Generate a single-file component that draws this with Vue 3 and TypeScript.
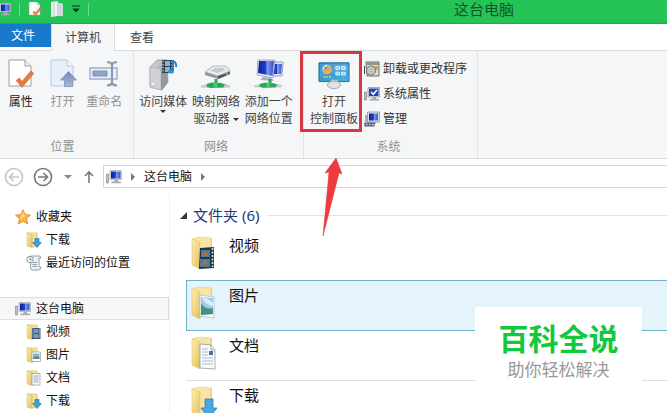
<script setup lang="ts">
interface Entry {
  label: string
  icon: string
}

const favorites: Entry[] = [
  { label: '下载', icon: 'f-download' },
  { label: '最近访问的位置', icon: 'recent' },
]

const libraries: Entry[] = [
  { label: '视频', icon: 'f-video' },
  { label: '图片', icon: 'f-picture' },
  { label: '文档', icon: 'f-document' },
  { label: '下载', icon: 'f-download' },
]

const folders: Entry[] = [
  { label: '视频', icon: 'big-video' },
  { label: '图片', icon: 'big-picture' },
  { label: '文档', icon: 'big-document' },
  { label: '下载', icon: 'big-download' },
]

const selected = '图片'

const systemLinks: Entry[] = [
  { label: '卸载或更改程序', icon: 'uninstall' },
  { label: '系统属性', icon: 'sysprops' },
  { label: '管理', icon: 'manage' },
]
</script>

<template>
  <div class="window">
    <svg class="defs" width="0" height="0" aria-hidden="true">
      <defs>
        <linearGradient id="g-folder" x1="0" y1="0" x2="1" y2="1">
          <stop offset="0" stop-color="#fbf0b4" /><stop offset="1" stop-color="#e3bf55" />
        </linearGradient>
        <linearGradient id="g-screen" x1="0" y1="0" x2="1" y2="0">
          <stop offset="0" stop-color="#0b1f9e" /><stop offset="0.5" stop-color="#2440c8" /><stop offset="0.55" stop-color="#7f9bf0" /><stop offset="1" stop-color="#3350cf" />
        </linearGradient>
        <linearGradient id="g-metal" x1="0" y1="0" x2="1" y2="1">
          <stop offset="0" stop-color="#d9dbdd" /><stop offset="1" stop-color="#85898e" />
        </linearGradient>
        <linearGradient id="g-panel" x1="0" y1="0" x2="1" y2="1">
          <stop offset="0" stop-color="#2c84bd" /><stop offset="1" stop-color="#4fb2e2" />
        </linearGradient>
        <linearGradient id="g-arrow" x1="0" y1="0" x2="0" y2="1">
          <stop offset="0" stop-color="#7288b4" /><stop offset="1" stop-color="#a9b9d8" />
        </linearGradient>
      </defs>

      <symbol id="pc" viewBox="0 0 16 16">
        <path d="M0.5 5h2v9h-2z" fill="#b9bec6" stroke="#7d838c" stroke-width=".6" />
        <path d="M4 1.5h11.5v9H4z" fill="#dfe3ea" stroke="#a2a9b5" stroke-width=".7" />
        <path d="M5 2.5h9.500v7H5z" fill="url(#g-screen)" />
        <path d="M8.500 10.500h3.500v2H15v1.700H5.500v-1.700h3z" fill="#a7adb7" />
      </symbol>
      <symbol id="page-check" viewBox="0 0 28 30">
        <path d="M2 1h16l6 6v20H2z" fill="#fff" stroke="#999da3" />
        <path d="M18 1v6h6" fill="#eef0f2" stroke="#999da3" />
        <path d="M10.500 20l4.500 5.500L25.500 13" fill="none" stroke="#e27c42" stroke-width="4.500" />
      </symbol>
      <symbol id="page-open" viewBox="0 0 28 30">
        <path d="M2 1h16l6 6v20H2z" fill="#e8effa" stroke="#b8c9e4" />
        <path d="M18 1v6h6" fill="#f5f8fd" stroke="#b8c9e4" />
        <path d="M19.500 12.500l8 8.500h-4v6.500h-8V21h-4z" fill="url(#g-arrow)" stroke="#7d91ba" stroke-width=".8" />
      </symbol>
      <symbol id="rename" viewBox="0 0 30 30">
        <path d="M1 9h27v11H1z" fill="#eaf1f9" stroke="#9cb0cc" stroke-width="1.400" />
        <path d="M4 12h14v5H4z" fill="#8da6c3" stroke="#7990b2" />
        <path d="M18 3q4 0 5 2.500Q24 3 28 3M18 26.500q4 0 5-2.500 1 2.500 5 2.500M23 5v19" fill="none" stroke="#8c9cb6" stroke-width="2.200" />
      </symbol>
      <symbol id="page-light" viewBox="0 0 14 16">
        <path d="M1 1l7-1v15l-7 1z" fill="#e9eef2" /><path d="M7 2h5l1 1.500V15H7z" fill="#cad7dd" />
        <path d="M4 2v13" stroke="#c8d3d9" />
      </symbol>

      <symbol id="media" viewBox="0 0 30 32">
        <path d="M2 8L9 1h10l1 22-6 8-12-3z" fill="url(#g-metal)" stroke="#8d9196" stroke-width=".7" />
        <path d="M2 8l11 2v21L2 28z" fill="#cfd1d4" stroke="#a3a7ab" stroke-width=".5" />
        <path d="M13 10l6-8v21l-6 8z" fill="#94989c" />
        <circle cx="5" cy="25" r="1" fill="#fff" />
        <path d="M14 1h11v13H14z" fill="#34404a" /><path d="M17 2h5v5h-5zM17 8h5v5h-5z" fill="#82b6d6" />
        <path d="M15 2v11M24 2v11" stroke="#e5edf2" stroke-dasharray="1.500 1.500" />
        <path d="M25 1v11M25 2q4 2 3 6" fill="none" stroke="#2387cf" stroke-width="2" /><ellipse cx="23" cy="12.500" rx="3" ry="2" fill="#2995dd" />
      </symbol>
      <symbol id="cable" viewBox="0 0 30 8">
        <path d="M0 4.500l7-1.500h19l4 1.500v2L20 7 0 6.500z" fill="#c7cbd0" />
        <path d="M6 3l5-1.500 10 .500 4 1.500-2 3-13 .500-4-1z" fill="#27a653" /><path d="M13 1.500h4v5.500h-4z" fill="#4ac674" />
      </symbol>
      <symbol id="drive" viewBox="0 0 32 32">
        <path d="M5 13L13 7h13l4 5v3L18 20 5 16z" fill="#92979c" />
        <path d="M5 13L13 7h13l4 5-12 5z" fill="#eceded" stroke="#a2a6aa" stroke-width=".7" />
        <path d="M10 12l5-3h8l3 2-8 3z" fill="#c9cccf" />
        <path d="M18 17l12-4v2l-12 5z" fill="#4e5459" /><circle cx="27" cy="15" r="1" fill="#6de470" />
        <path d="M16 20v5" stroke="#2ba657" stroke-width="3" />
        <use href="#cable" x="1" y="22" width="29" height="8" />
      </symbol>
      <symbol id="netplace" viewBox="0 0 32 32">
        <path d="M17 3h13l-1 14H17z" fill="#dce2ee" stroke="#98a3b7" /><path d="M19 5h10l-1 10h-9z" fill="url(#g-screen)" />
        <path d="M5 1h17l-2 18-16-3z" fill="#e5e9f2" stroke="#a0acbe" /><path d="M6 2h15l-1.500 15L5 14z" fill="url(#g-screen)" />
        <path d="M10 18l8 1 3 3-14-1z" fill="#aab0bc" /><path d="M17 20v4" stroke="#2ba657" stroke-width="3" />
        <use href="#cable" x="1" y="22" width="28" height="8" />
      </symbol>
      <symbol id="control" viewBox="0 0 34 30">
        <path d="M1 2h32v20H1z" fill="url(#g-panel)" stroke="#206f9f" />
        <path d="M2 3h30v8Q17 11 2 17z" fill="#fff" opacity=".13" />
        <circle cx="9.500" cy="9" r="4" fill="none" stroke="#eef3e9" stroke-width="1.600" /><path d="M9.500 9V4.500A4.500 4.500 0 1 1 5 9z" fill="#f5a53b" />
        <path d="M19 6h4v3h-4zM25 6h4v3h-4zM19 12h4v3h-4zM25 12h4v3h-4z" fill="#7fd0f0" stroke="#e6f7ff" />
        <path d="M6 17h8" stroke="#9fe2a7" stroke-width="2" stroke-dasharray="2 1" />
        <path d="M14 20h7v4h-7z" fill="#bfc7cd" /><ellipse cx="17" cy="25.500" rx="7" ry="4" fill="#dce3e7" stroke="#9da8b0" />
      </symbol>

      <symbol id="uninstall" viewBox="0 0 16 16">
        <path d="M2 1h13v14H3z" fill="#d9dfce" stroke="#68706a" /><path d="M2 1h13v3H2z" fill="#8c9b89" />
        <path d="M10 5h4v4h-4z" fill="#d8a23c" /><circle cx="7" cy="9.500" r="4.500" fill="#c4c9cc" stroke="#686e72" /><circle cx="7" cy="9.500" r="1.300" fill="#fff" stroke="#777" stroke-width=".6" />
        <path d="M0.500 5v8" stroke="#3e4449" />
      </symbol>
      <symbol id="sysprops" viewBox="0 0 16 16">
        <path d="M0.500 6h2v8h-2z" fill="#b9bec6" stroke="#767b84" stroke-width=".6" />
        <path d="M4 1.500h11.500v9.500H4z" fill="#dfe3ea" stroke="#8790a3" stroke-width=".7" /><path d="M5 2.500h9.500v7.500H5z" fill="#2741b5" />
        <path d="M7 6l2.300 2.300L13 4" fill="none" stroke="#fff" stroke-width="1.600" />
        <path d="M8.500 11h3.500v2H15v1.500H5.500V13h3z" fill="#a0a6b2" />
      </symbol>
      <symbol id="manage" viewBox="0 0 16 16">
        <path d="M3.500 1h12v10h-12z" fill="#dde2ea" stroke="#8590a4" stroke-width=".8" /><path d="M5 2.500h9v7H5z" fill="url(#g-screen)" />
        <path d="M1 4h2v7H1zM7 11h5v2H7z" fill="#a7adb7" /><path d="M0.500 11.500h10v4h-10z" fill="#4d5b70" /><path d="M2 13.500h1.500M5 13.500h1.500M8 13.500h1.500" stroke="#dce5ee" stroke-width="1.500" />
      </symbol>

      <symbol id="star" viewBox="0 0 16 16">
        <path d="M8 .8l2.200 4.800 5.200.6-3.900 3.500 1.100 5.200L8 12.300l-4.600 2.600 1.100-5.200L.6 6.200l5.200-.6z" fill="#fcb645" stroke="#df8b26" stroke-width=".9" />
        <path d="M8 3l1.300 3.500 3 .3Q8 7 5 11z" fill="#ffdc83" />
      </symbol>
      <symbol id="recent" viewBox="0 0 16 16">
        <path d="M5 1h8q2 0 2 2h-2v9h2q0 3-2.500 3H6q-1.500 0-1.500-2z" fill="#edf1f3" stroke="#8896a0" stroke-width=".9" />
        <path d="M6.500 7.500H11M6.500 9.500H11M6.500 11.500H11" stroke="#6f8fa5" stroke-width=".8" />
        <circle cx="4" cy="4.500" r="3.200" fill="#f6f9fa" stroke="#7c8d99" stroke-width=".9" /><path d="M4 2.500v2.200h1.700" fill="none" stroke="#5a6a75" stroke-width=".8" />
      </symbol>
      <symbol id="f-base" viewBox="0 0 16 16">
        <path d="M5 1h6.500v13.500H5z" fill="#e7ce7c" />
        <path d="M1 .8h10v13.200L6 15.500V2.500z" fill="#f2df98" stroke="#dcc573" stroke-width=".5" />
        <path d="M1 .8l5 1.700v13L1 14z" fill="url(#g-folder)" stroke="#d3b75d" stroke-width=".5" />
      </symbol>
      <symbol id="f-video" viewBox="0 0 16 16">
        <use href="#f-base" /><path d="M6 4h8.500v11H6z" fill="#38506a" /><path d="M8 5h4.500v4H8zM8 10h4.500v4H8z" fill="#729bbd" /><path d="M7 4.500v10M13.700 4.500v10" stroke="#dde5e8" stroke-dasharray="1 1" />
      </symbol>
      <symbol id="f-picture" viewBox="0 0 16 16">
        <use href="#f-base" /><path d="M6 5h8.500v9.500H6z" fill="#fff" stroke="#8f9ea6" stroke-width=".7" /><path d="M7 6.500h6.500v5H7z" fill="#87b9c9" /><path d="M7 11l3-2 3.500 1v2H7z" fill="#5d8b72" />
      </symbol>
      <symbol id="f-document" viewBox="0 0 16 16">
        <use href="#f-base" /><path d="M6 3.500h8V15H6z" fill="#fafafa" stroke="#8f979d" stroke-width=".7" /><path d="M7.500 6h5M7.500 8h5M7.500 10h5M7.500 12h5" stroke="#8796a5" stroke-width=".8" />
      </symbol>
      <symbol id="f-download" viewBox="0 0 16 16">
        <use href="#f-base" /><path d="M9 6.500h4v4h2.300L11 15.500 6.700 10.500H9z" fill="#3fa1dc" stroke="#2376b2" stroke-width=".7" />
      </symbol>

      <symbol id="big-base" viewBox="0 0 26 34">
        <path d="M8 3l13-1v24L8 32z" fill="#e9d083" /><path d="M1 3q4-2 8-2l11 1v25L8 32z" fill="#f6e6a6" stroke="#e4ce80" stroke-width=".6" />
        <path d="M1 3l8 3v27l-8-4z" fill="url(#g-folder)" stroke="#dfc470" stroke-width=".6" />
      </symbol>
      <symbol id="big-video" viewBox="0 0 26 34">
        <use href="#big-base" /><path d="M9 12l14-1v21l-15 1z" fill="#27353f" /><path d="M10 14h9v7h-9zM9 23h10v8H9z" fill="#437fa5" />
        <path d="M11 20q1-5 4-4t2 4zM11 29q0-4 4-5l2 4z" fill="#ad7144" /><path d="M21.500 12v19" stroke="#e3e8e9" stroke-width="1.500" stroke-dasharray="2 1.500" />
      </symbol>
      <symbol id="big-picture" viewBox="0 0 26 34">
        <use href="#big-base" /><path d="M9 9l14 2v21l-14-2z" fill="#f8fcfd" stroke="#a6bac3" stroke-width=".7" /><path d="M10 11l12 1v16l-12 1z" fill="#9fcbe8" />
        <path d="M10 18q6 6 12 4v6l-12 1z" fill="#4b8e83" /><path d="M11 12q5-1 11 5v3q-8-1-11-8z" fill="#dceef7" />
      </symbol>
      <symbol id="big-document" viewBox="0 0 26 34">
        <use href="#big-base" /><path d="M9 8l11 1 4 5v19l-15-1z" fill="#f8fafc" stroke="#929ca7" stroke-width=".8" /><path d="M20 9v5h4" fill="#e1e6eb" stroke="#929ca7" stroke-width=".7" />
        <path d="M11 13h6M11 16h6M11 19h6M11 22h11M11 25h11M11 28h11" stroke="#aeb9ca" /><path d="M18 15h4v4h-4z" fill="#4c6d9e" />
      </symbol>
      <symbol id="big-download" viewBox="0 0 26 34">
        <use href="#big-base" /><path d="M14 13h8v9h4l-8 10-8-10h4z" fill="#4aa7df" stroke="#2a7db9" stroke-width=".8" />
      </symbol>
    </svg>

    <header class="titlebar">
      <div class="quick">
        <svg class="quick-pc" viewBox="4 0 12 16"><use href="#pc" width="16" height="16" /></svg>
        <i class="bar"></i>
        <button class="quick-btn" aria-label="属性"><svg><use href="#page-check" /></svg></button>
        <button class="quick-btn" aria-label="新建文件夹"><svg><use href="#page-light" /></svg></button>
        <button class="quick-more" aria-label="自定义快速访问工具栏">
          <svg viewBox="0 0 8 8"><path d="M0 1h8M1 4h6L4 7z" fill="#10391c" stroke="#10391c" /></svg>
        </button>
        <i class="bar"></i>
      </div>
      <h1 class="title">这台电脑</h1>
    </header>

    <nav class="tabs">
      <button class="tab file">文件</button>
      <button class="tab active">计算机</button>
      <button class="tab">查看</button>
    </nav>

    <section class="ribbon">
      <div class="group location">
        <div class="tools">
          <button class="tool strong"><svg><use href="#page-check" /></svg><span>属性</span></button>
          <button class="tool dim"><svg><use href="#page-open" /></svg><span>打开</span></button>
          <button class="tool dim"><svg><use href="#rename" /></svg><span>重命名</span></button>
        </div>
        <div class="caption">位置</div>
      </div>
      <div class="group network">
        <div class="tools">
          <button class="tool">
            <svg><use href="#media" /></svg><span>访问媒体</span><i class="caret"></i>
          </button>
          <button class="tool"><svg><use href="#drive" /></svg><span>映射网络<br />驱动器 <i class="caret"></i></span></button>
          <button class="tool"><svg><use href="#netplace" /></svg><span>添加一个<br />网络位置</span></button>
        </div>
        <div class="caption">网络</div>
      </div>
      <div class="group system">
        <div class="tools">
          <button class="tool control"><svg><use href="#control" /></svg><span>打开<br />控制面板</span></button>
          <div class="links">
            <button v-for="link in systemLinks" :key="link.label" class="link">
              <svg><use :href="'#' + link.icon" /></svg>{{ link.label }}
            </button>
          </div>
        </div>
        <div class="caption">系统</div>
        <div class="marker"></div>
        <svg class="pointer" viewBox="0 0 20 80"><path d="M14 1l6 16-3-1L1 79 7 15l-4 1z" fill="#ef3b3f" stroke="#d9343a" stroke-width=".5" /></svg>
      </div>
    </section>

    <div class="address-row">
      <button class="round back" aria-label="后退"><svg viewBox="0 0 20 20"><circle cx="10" cy="10" r="8.500" /><path d="M15 10H6M9.500 6L5.500 10l4 4" /></svg></button>
      <button class="round" aria-label="前进"><svg viewBox="0 0 20 20"><circle cx="10" cy="10" r="8.500" /><path d="M5 10h9M10.500 6l4 4-4 4" /></svg></button>
      <button class="history" aria-label="最近位置"><i class="caret"></i></button>
      <button class="up" aria-label="上移"><svg viewBox="0 0 12 14"><path d="M6 13V2M2 6l4-4 4 4" /></svg></button>
      <div class="address">
        <svg class="small"><use href="#pc" /></svg>
        <i class="chevron"></i>
        <a href="#computer">这台电脑</a>
        <i class="chevron"></i>
      </div>
    </div>

    <div class="body">
      <aside class="sidebar">
        <a class="node" href="#favorites"><svg class="small"><use href="#star" /></svg>收藏夹</a>
        <a v-for="item in favorites" :key="item.label" class="node child" href="#item">
          <svg class="small"><use :href="'#' + item.icon" /></svg>{{ item.label }}
        </a>
        <a class="node current" href="#computer"><svg class="small"><use href="#pc" /></svg>这台电脑</a>
        <a v-for="item in libraries" :key="item.label" class="node child" href="#item">
          <svg class="small"><use :href="'#' + item.icon" /></svg>{{ item.label }}
        </a>
      </aside>
      <main class="content">
        <h2 class="section"><svg viewBox="0 0 7 7"><path d="M7 0v7H0z" fill="#333" /></svg>文件夹 (6)</h2>
        <a v-for="item in folders" :key="item.label" href="#folder" class="folder" :class="{ selected: item.label === selected }">
          <svg><use :href="'#' + item.icon" /></svg><span>{{ item.label }}</span>
        </a>
      </main>
    </div>

    <div class="badge">
      <strong>百科全说</strong>
      <span>助你轻松解决</span>
    </div>
  </div>
</template>

<style>
body {
  margin: 0;
  overflow: hidden;
}
</style>

<style scoped>
.window {
  position: relative;
  height: 100vh;
  overflow: hidden;
  display: flex;
  flex-direction: column;
  background: #fff;
  color: #222;
  font: 12px/17px "Noto Sans", "Noto Sans CJK SC", sans-serif;
}
.defs {
  position: absolute;
}
button {
  padding: 0;
  border: 0;
  background: none;
  font: inherit;
  color: inherit;
}
a {
  color: inherit;
  text-decoration: none;
}
svg {
  display: block;
  flex: none;
}
.small {
  width: 16px;
  height: 16px;
}
.titlebar {
  flex: none;
  display: flex;
  height: 24px;
  box-sizing: border-box;
  background: #25c355;
  border-bottom: 1px solid #22a94b;
}
.titlebar::after {
  content: "";
  flex: 153;
}
.quick {
  display: flex;
  align-items: center;
  height: 18px;
  gap: 8px;
}
.quick-pc {
  width: 11px;
  height: 15px;
}
.bar {
  width: 1px;
  height: 13px;
  background: #73d68f;
}
.quick-btn svg {
  width: 14px;
  height: 16px;
}
.quick-more svg {
  width: 8px;
  height: 8px;
}
.title {
  flex: 425;
  margin: 0;
  font-size: 15px;
  font-weight: 400;
  line-height: 18px;
  text-align: right;
  color: #14532a;
}
.tabs {
  flex: none;
  display: flex;
  height: 27px;
  box-sizing: border-box;
  border-bottom: 1px solid #dadbdc;
}
.tab {
  width: 54px;
  height: 26px;
  color: #444;
}
.tab.file {
  width: 51px;
  height: 23px;
  padding-right: 5px;
  background: #1979ca;
  color: #fff;
}
.tab.active {
  width: 64px;
  height: 27px;
  box-sizing: border-box;
  border: 1px solid #dadbdc;
  border-width: 0 1px;
  background: #f5f6f7;
}
.ribbon {
  flex: none;
  display: flex;
  height: 108px;
  box-sizing: border-box;
  background: #f5f6f7;
  border-bottom: 1px solid #dadbdc;
}
.group {
  position: relative;
  box-sizing: border-box;
  display: flex;
  flex-direction: column;
  justify-content: space-between;
  padding: 8px 8px 3px 3px;
  border-right: 1px solid #e2e3e4;
}
.location {
  width: 134px;
  padding-left: 0;
}
.network {
  width: 170px;
}
.system {
  width: 174px;
  padding: 8px 4px 3px 0;
}
.tools {
  display: flex;
}
.tool {
  flex: 1;
  display: flex;
  flex-direction: column;
  align-items: center;
  color: #444;
  white-space: nowrap;
}
.tool svg {
  width: 32px;
  height: 32px;
  margin-bottom: 2px;
}
.strong {
  color: #222;
}
.location .tool svg {
  height: 30px;
  margin-bottom: 4px;
}
.dim {
  color: #929292;
}
.caret {
  display: inline-block;
  border: 3px solid transparent;
  border-top-color: #333;
  border-bottom: 0;
  vertical-align: middle;
}
.tool.control {
  flex: none;
  width: 60px;
}
.links {
  display: flex;
  flex-direction: column;
  gap: 8px;
  padding-top: 1px;
}
.link {
  display: flex;
  align-items: center;
  gap: 3px;
  color: #333;
}
.link svg {
  width: 16px;
  height: 16px;
}
.caption {
  text-align: center;
  color: #929292;
}
.marker {
  position: absolute;
  top: 0;
  left: -4px;
  width: 62px;
  height: 81px;
  box-sizing: border-box;
  border: 3px solid #d5383e;
}
.pointer {
  position: absolute;
  z-index: 1;
  top: 106px;
  left: 18px;
  width: 20px;
  height: 80px;
}
.address-row {
  flex: none;
  display: flex;
  align-items: center;
  height: 35px;
  padding-left: 4px;
  color: #111;
}
.round svg {
  width: 20px;
  height: 20px;
  fill: none;
  stroke: #777;
  stroke-width: 1.6;
}
.round.back {
  margin-right: 9px;
}
.round.back svg {
  stroke: #c4c4c4;
}
.history {
  display: flex;
  width: 30px;
  justify-content: center;
}
.history .caret {
  border-width: 4px 4px 0;
  border-top-color: #888;
}
.up svg {
  width: 12px;
  height: 14px;
  fill: none;
  stroke: #777;
  stroke-width: 1.6;
}
.up {
  margin-right: 8px;
}
.address {
  flex: 1;
  display: flex;
  align-items: center;
  gap: 9px;
  height: 23px;
  box-sizing: border-box;
  padding-left: 2px;
  border: 1px solid #d6d6d6;
  border-right: 0;
}
.chevron {
  border: 4px solid transparent;
  border-left-color: #777;
  border-right: 0;
}
.body {
  flex: 1;
  min-height: 0;
  display: flex;
}
.sidebar {
  width: 170px;
  box-sizing: border-box;
  padding-top: 11px;
  border-right: 1px solid #f0f0f0;
  color: #111;
}
.node {
  display: flex;
  align-items: center;
  gap: 5px;
  height: 23px;
  box-sizing: border-box;
  padding-left: 15px;
}
.node.child {
  gap: 4px;
  padding-left: 26px;
}
.node.current {
  margin-top: 23px;
  border: 1px solid #dedede;
  border-left: 0;
  background: #f7f7f7;
}
.content {
  flex: 1;
  min-width: 0;
  padding: 11px 0 0 10px;
}
.section {
  display: flex;
  align-items: center;
  gap: 6px;
  margin: 0 0 5px;
  font-size: 15px;
  font-weight: 400;
  line-height: 20px;
  color: #1e3a7b;
}
.section svg {
  width: 7px;
  height: 7px;
}
.section::after {
  content: "";
  flex: 1;
  height: 1px;
  margin-left: 2px;
  background: #e2e2e2;
}
.folder {
  display: flex;
  gap: 12px;
  height: 50px;
  box-sizing: border-box;
  margin-left: 6px;
  padding: 4px 0 0 4px;
  border: 1px solid transparent;
  border-right: 0;
  font-size: 15px;
  line-height: 20px;
  color: #111;
}
.folder svg {
  width: 26px;
  height: 34px;
  margin-top: 1px;
}
.folder.selected {
  height: 51px;
  margin-bottom: -1px;
  border-color: #6fb3c9;
  background: #e5f3fa;
}
.folder:last-child {
  border-top-color: #dedede;
}
.badge {
  position: absolute;
  right: 25px;
  bottom: 24px;
  display: flex;
  flex-direction: column;
  align-items: center;
  width: 167px;
  height: 82px;
  box-sizing: border-box;
  padding-top: 13px;
  background: #fff;
}
.badge strong {
  font-size: 30px;
  font-weight: 700;
  line-height: 38px;
  color: #12c83c;
}
.badge span {
  font-size: 17px;
  line-height: 24px;
  color: #999;
}
</style>
